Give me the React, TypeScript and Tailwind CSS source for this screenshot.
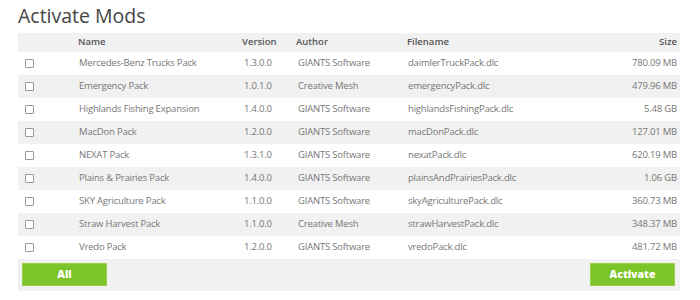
import React from "react";

const mods = [
  ["Mercedes-Benz Trucks Pack", "1.3.0.0", "GIANTS Software", "daimlerTruckPack.dlc", "780.09 MB"],
  ["Emergency Pack", "1.0.1.0", "Creative Mesh", "emergencyPack.dlc", "479.96 MB"],
  ["Highlands Fishing Expansion", "1.4.0.0", "GIANTS Software", "highlandsFishingPack.dlc", "5.48 GB"],
  ["MacDon Pack", "1.2.0.0", "GIANTS Software", "macDonPack.dlc", "127.01 MB"],
  ["NEXAT Pack", "1.3.1.0", "GIANTS Software", "nexatPack.dlc", "620.19 MB"],
  ["Plains & Prairies Pack", "1.4.0.0", "GIANTS Software", "plainsAndPrairiesPack.dlc", "1.06 GB"],
  ["SKY Agriculture Pack", "1.1.0.0", "GIANTS Software", "skyAgriculturePack.dlc", "360.73 MB"],
  ["Straw Harvest Pack", "1.1.0.0", "Creative Mesh", "strawHarvestPack.dlc", "348.37 MB"],
  ["Vredo Pack", "1.2.0.0", "GIANTS Software", "vredoPack.dlc", "481.72 MB"],
];

const cols = "grid grid-cols-[60px_164px_54px_111px_1fr_auto] items-center";

export default function App() {
  return (
    <div className="w-[700px] h-[300px] bg-white pl-[18px] pr-[20px] pt-[2px] text-[#777]" style={{ fontFamily: '"Open Sans", sans-serif' }}>
      <h1 className="text-[19.5px] leading-[28px] text-[#444] font-normal">Activate Mods</h1>
      <div className="mt-[3px] w-[662px]">
        <div className={`${cols} h-[19px] bg-[#f1f1f1] text-[9.5px] font-semibold text-[#555]`}>
          <div />
          <div>Name</div>
          <div>Version</div>
          <div>Author</div>
          <div>Filename</div>
          <div className="pr-[3px] text-right">Size</div>
        </div>
        {mods.map((m, i) => (
          <div key={i} className={`${cols} h-[23px] text-[9.5px] tracking-[-0.2px] ${i % 2 === 1 ? "bg-[#f1f1f1]" : "bg-white"}`}>
            <div className="pl-[7px] flex items-center">
              <span className="block w-[9px] h-[9px] border border-[#999] bg-white rounded-[1px]" />
            </div>
            <div className="pl-[1px]">{m[0]}</div>
            <div className="pl-[2px]">{m[1]}</div>
            <div className="pl-[2px]">{m[2]}</div>
            <div className="pl-[1px]">{m[3]}</div>
            <div className="pr-[3px] text-right">{m[4]}</div>
          </div>
        ))}
        <div className="h-[32px] bg-[#f1f1f1] flex items-start justify-between px-[4px] pt-[4px]">
          <button className="w-[85px] h-[23px] bg-[#7dc42b] border border-[#94d34a] text-white font-extrabold text-[10.5px] leading-none">All</button>
          <button className="w-[85px] h-[23px] bg-[#7dc42b] border border-[#94d34a] text-white font-extrabold text-[10.5px] leading-none mr-[1px]">Activate</button>
        </div>
      </div>
    </div>
  );
}
